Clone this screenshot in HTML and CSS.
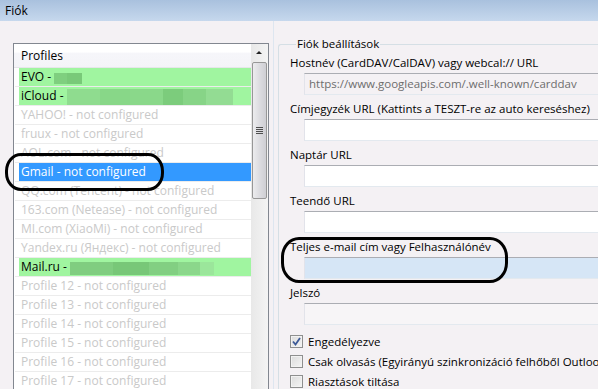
FILE: index.html
```html
<!DOCTYPE html>
<html lang="hu">
<head>
  <meta charset="UTF-8" />
  <title>Fiók</title>
  <link rel="stylesheet" href="styles.css">
</head>
<body>
  <div class="titlebar">Fiók</div>

  <div class="main">
    <div class="left-pane">
      <div class="listbox">
        <div class="list">
          <div class="list-header">Profiles</div>
          <div class="row"><span class="item ok">EVO - <i class="blur blur-evo"></i></span></div>
          <div class="row"><span class="item ok">iCloud - <i class="blur blur-icloud"></i></span></div>
          <div class="row"><span class="item off">YAHOO! - not configured</span></div>
          <div class="row"><span class="item off">fruux - not configured</span></div>
          <div class="row"><span class="item off">AOL.com - not configured</span></div>
          <div class="row"><span class="item selected">Gmail - not configured</span></div>
          <div class="row"><span class="item off">QQ.com (Tencent) - not configured</span></div>
          <div class="row"><span class="item off">163.com (Netease) - not configured</span></div>
          <div class="row"><span class="item off">MI.com (XiaoMi) - not configured</span></div>
          <div class="row"><span class="item off">Yandex.ru (Яндекс) - not configured</span></div>
          <div class="row"><span class="item ok">Mail.ru - <i class="blur blur-mail"></i></span></div>
          <div class="row"><span class="item off">Profile 12 - not configured</span></div>
          <div class="row"><span class="item off">Profile 13 - not configured</span></div>
          <div class="row"><span class="item off">Profile 14 - not configured</span></div>
          <div class="row"><span class="item off">Profile 15 - not configured</span></div>
          <div class="row"><span class="item off">Profile 16 - not configured</span></div>
          <div class="row"><span class="item off">Profile 17 - not configured</span></div>
        </div>
        <div class="scrollbar">
          <div class="arrow-up"></div>
          <div class="thumb"><span class="grip"></span></div>
        </div>
      </div>
    </div>

    <div class="splitter"></div>

    <div class="right-pane">
      <fieldset class="group">
        <legend>Fiók beállítások</legend>

        <div class="field">
          <label>Hostnév (CardDAV/CalDAV) vagy webcal:// URL</label>
          <div class="input disabled">https://www.googleapis.com/.well-known/carddav</div>
        </div>
        <div class="field">
          <label>Címjegyzék URL (Kattints a TESZT-re az auto kereséshez)</label>
          <div class="input"></div>
        </div>
        <div class="field">
          <label>Naptár URL</label>
          <div class="input"></div>
        </div>
        <div class="field">
          <label>Teendő URL</label>
          <div class="input"></div>
        </div>
        <div class="field">
          <label>Teljes e-mail cím vagy Felhasználónév</label>
          <div class="input focused"></div>
        </div>
        <div class="field">
          <label>Jelszó</label>
          <div class="input dim"></div>
        </div>

        <div class="checks">
          <div class="check">
            <span class="box">
              <svg width="9" height="9" viewBox="0 0 9 9"><path d="M1 4.5 L3.5 7.5 L8 1" fill="none" stroke="#3d5a98" stroke-width="1.8"/></svg>
            </span>
            Engedélyezve
          </div>
          <div class="check"><span class="box"></span>Csak olvasás (Egyirányú szinkronizáció felhőből Outlookba)</div>
          <div class="check"><span class="box"></span>Riasztások tiltása</div>
        </div>
      </fieldset>
    </div>
  </div>

  <div class="mark mark-gmail"></div>
  <div class="mark mark-email"></div>
</body>
</html>
```

FILE: styles.css
```css
* {
  box-sizing: border-box;
}

html, body {
  margin: 0;
  padding: 0;
}

body {
  position: relative;
  width: 598px;
  height: 389px;
  overflow: hidden;
  background: #f4f1f4;
  font-family: "Open Sans", "Noto Sans", sans-serif;
  font-size: 11px;
  color: #000;
}

.titlebar {
  height: 21px;
  line-height: 21px;
  padding-left: 5px;
  background: linear-gradient(#a9c1de, #c6d8ed);
  font-size: 12px;
}

.main {
  display: flex;
  height: 368px;
}

/* profiles list */
.left-pane {
  width: 273px;
  flex: none;
  padding: 22px 0 0 13px;
}

.listbox {
  display: flex;
  width: 256px;
  height: 380px;
  border: 1px solid #828790;
  background: #fff;
}

.list {
  width: 237px;
  flex: none;
}

.list-header {
  height: 24px;
  padding-left: 7px;
  line-height: 23px;
  font-size: 12px;
  border-bottom: 1px solid #e6e6ea;
  background: linear-gradient(#fff 0, #fff 35%, #f6f6fa 40%, #f4f4f8 100%);
}

.row {
  margin-left: 1px;
  height: 19px;
  padding-left: 4px;
  border-bottom: 1px solid #ececec;
}

.item {
  display: block;
  height: 18px;
  line-height: 18px;
  padding-left: 2px;
  font-size: 12px;
  white-space: nowrap;
}

.item.ok {
  background: #a0f5a0;
}

.item.off {
  color: #c9c9c9;
}

.item.selected {
  background: #3399ff;
  color: #fff;
}

.blur {
  display: inline-block;
  vertical-align: top;
}

.blur-evo {
  width: 28px;
  height: 11px;
  margin-top: 5px;
  background: linear-gradient(90deg, #7fcf7f 0 45%, #79c979 45% 100%);
}

.blur-icloud {
  width: 166px;
  height: 16px;
  margin-top: 2px;
  background: linear-gradient(90deg, #8fdc8f 0 20%, #88d788 20% 38%, #8ad88a 38% 58%, #7ccc7c 58% 70%, #87d487 70% 84%, #93dc93 84% 100%);
}

.blur-mail {
  width: 144px;
  height: 13px;
  margin-top: 4px;
  background: linear-gradient(90deg, #80cd80 0 30%, #78c778 30% 55%, #82cf82 55% 75%, #8bd78b 75% 90%, #9be69b 90% 100%);
}

.scrollbar {
  width: 17px;
  flex: none;
  padding: 0 1px;
  background: linear-gradient(90deg, #e8e8e8, #f4f4f4);
}

.arrow-up {
  height: 18px;
  position: relative;
}

.arrow-up::after {
  content: "";
  position: absolute;
  left: 4px;
  top: 7px;
  border-left: 3px solid transparent;
  border-right: 3px solid transparent;
  border-bottom: 3px solid #222;
}

.thumb {
  height: 137px;
  display: flex;
  align-items: center;
  justify-content: center;
  border: 1px solid #979797;
  border-radius: 2px;
  background: linear-gradient(90deg, #ececee, #dcdce0 50%, #cfcfd4);
}

.grip {
  width: 7px;
  height: 7px;
  background: repeating-linear-gradient(#4e4e4e 0 1px, transparent 1px 2px);
}

.splitter {
  width: 1px;
  flex: none;
  background: #dde6f0;
}

/* account settings */
.right-pane {
  flex: 1;
  padding: 15px 0 0 4px;
  min-width: 0;
}

.group {
  margin: 0;
  padding: 3px 0 0 11px;
  width: 360px;
  height: 400px;
  border: 1px solid #d5dfe5;
  border-right: none;
  border-radius: 3px 0 0 0;
}

.group legend {
  padding: 0 1px;
  margin-left: 6px;
  line-height: 16px;
  font-size: 11.5px;
}

.field {
  margin-bottom: 6px;
}

.field label {
  display: block;
  height: 16px;
  line-height: 16px;
  font-size: 11.5px;
}

.input {
  margin: 2px 0 0 14px;
  height: 22px;
  line-height: 20px;
  padding-left: 4px;
  font-size: 11.5px;
  background: #fff;
  border: 1px solid;
  border-color: #abadb3 #dbdfe6 #e3e9ef #e2e3ea;
  white-space: nowrap;
}

.input.disabled {
  background: #f4f1f4;
  color: #6d6d6d;
}

.input.focused {
  background: #d6e6f6;
}

.input.dim {
  background: #f7f5f7;
}

.checks {
  margin-top: 2px;
}

.check {
  display: flex;
  align-items: center;
  gap: 5px;
  height: 20px;
  font-size: 11.5px;
  white-space: nowrap;
}

.box {
  width: 13px;
  height: 13px;
  flex: none;
  display: flex;
  align-items: center;
  justify-content: center;
  border: 1px solid #8e8f8f;
  background: linear-gradient(135deg, #dcdcdc, #f4f4f4);
  box-shadow: inset 0 0 0 1px #f2f2f2;
}

/* hand drawn marks over the screenshot */
.mark {
  position: absolute;
  border: 3px solid #000;
}

.mark-gmail {
  left: 5px;
  top: 153px;
  width: 159px;
  height: 38px;
  border-radius: 16px / 18px;
}

.mark-email {
  left: 281px;
  top: 237px;
  width: 227px;
  height: 46px;
  border-radius: 18px / 20px;
}
```
